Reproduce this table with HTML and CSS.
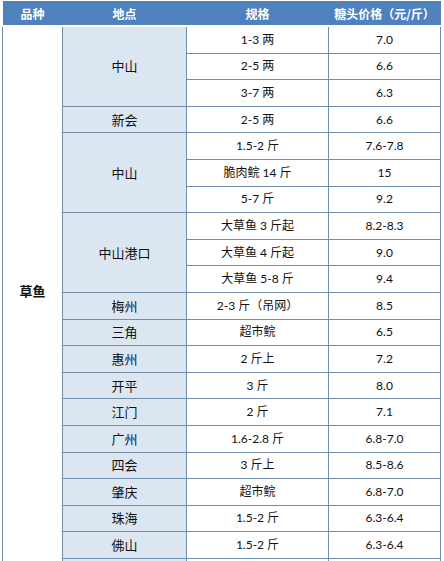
FILE: index.html
```html
<!DOCTYPE html>
<html>
<head>
<meta charset="utf-8">
<link rel="stylesheet" href="styles.css">
</head>
<body>
<div class="wrap">
<table class="grid">
<colgroup><col class="c1"><col class="c2"><col class="c3"><col class="c4"></colgroup>
<thead>
<tr class="head"><th>品种</th><th>地点</th><th>规格</th><th>糖头价格（元/斤）</th></tr>
</thead>
<tbody>
<tr><td class="kind" rowspan="21">草鱼</td><td class="loc" rowspan="3">中山</td><td>1-3 两</td><td>7.0</td></tr>
<tr><td>2-5 两</td><td>6.6</td></tr>
<tr><td>3-7 两</td><td>6.3</td></tr>
<tr><td class="loc">新会</td><td>2-5 两</td><td>6.6</td></tr>
<tr><td class="loc" rowspan="3">中山</td><td>1.5-2 斤</td><td>7.6-7.8</td></tr>
<tr><td>脆肉鲩 14 斤</td><td>15</td></tr>
<tr><td>5-7 斤</td><td>9.2</td></tr>
<tr><td class="loc" rowspan="3">中山港口</td><td>大草鱼 3 斤起</td><td>8.2-8.3</td></tr>
<tr><td>大草鱼 4 斤起</td><td>9.0</td></tr>
<tr><td>大草鱼 5-8 斤</td><td>9.4</td></tr>
<tr><td class="loc">梅州</td><td>2-3 斤（吊网）</td><td>8.5</td></tr>
<tr><td class="loc">三角</td><td>超市鲩</td><td>6.5</td></tr>
<tr><td class="loc">惠州</td><td>2 斤上</td><td>7.2</td></tr>
<tr><td class="loc">开平</td><td>3 斤</td><td>8.0</td></tr>
<tr><td class="loc">江门</td><td>2 斤</td><td>7.1</td></tr>
<tr><td class="loc">广州</td><td>1.6-2.8 斤</td><td>6.8-7.0</td></tr>
<tr><td class="loc">四会</td><td>3 斤上</td><td>8.5-8.6</td></tr>
<tr><td class="loc">肇庆</td><td>超市鲩</td><td>6.8-7.0</td></tr>
<tr><td class="loc">珠海</td><td>1.5-2 斤</td><td>6.3-6.4</td></tr>
<tr><td class="loc">佛山</td><td>1.5-2 斤</td><td>6.3-6.4</td></tr>
<tr><td class="loc"></td><td></td><td></td></tr>
</tbody>
</table>
</div>
</body>
</html>
```
FILE: styles.css
```css
html, body {
  margin: 0;
  padding: 0;
  background: #ffffff;
  height: 561px;
  overflow: hidden;
}
.wrap {
  padding: 1px 0 0 2px;
}
.grid {
  border-collapse: collapse;
  table-layout: fixed;
  width: 438px;
  font-family: "Lato", "Noto Sans CJK SC", sans-serif;
  font-size: 12px;
  color: #111111;
}
.c1 { width: 60px; }
.c2 { width: 124px; }
.c3 { width: 142px; }
.c4 { width: 112px; }
.head th {
  height: 24px;
  padding: 0;
  background: #4f81bd;
  color: #ffffff;
  font-weight: bold;
  font-size: 12px;
  font-family: "Noto Sans CJK SC", sans-serif;
  border-bottom: 2px solid #ffffff;
  text-align: center;
}
.grid tbody td {
  height: 25.6px;
  padding: 0;
  border: 1px solid #6f8ca8;
  text-align: center;
  vertical-align: middle;
  line-height: 16px;
}
.grid tbody td.kind {
  font-weight: bold;
  font-family: "Noto Sans CJK SC", sans-serif;
  font-size: 13px;
  vertical-align: top;
  padding-top: 256px;
}
.grid tbody td.loc {
  background: #dce6f1;
  font-family: "Noto Sans CJK SC", sans-serif;
  font-size: 13px;
}
```
